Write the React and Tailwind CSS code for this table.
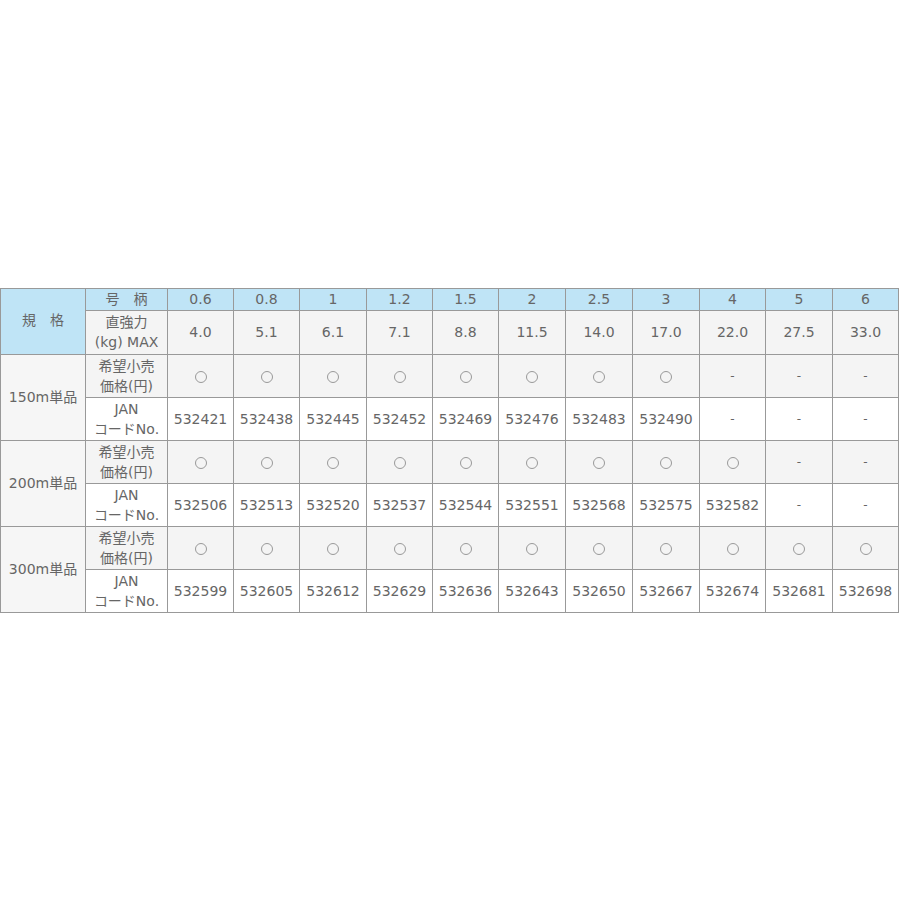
import React from 'react';

const COLS = [
  { w: 'w-[66px]', size: '0.6', kg: '4.0' },
  { w: 'w-[66px]', size: '0.8', kg: '5.1' },
  { w: 'w-[67px]', size: '1', kg: '6.1' },
  { w: 'w-[66px]', size: '1.2', kg: '7.1' },
  { w: 'w-[66px]', size: '1.5', kg: '8.8' },
  { w: 'w-[67px]', size: '2', kg: '11.5' },
  { w: 'w-[67px]', size: '2.5', kg: '14.0' },
  { w: 'w-[67px]', size: '3', kg: '17.0' },
  { w: 'w-[66px]', size: '4', kg: '22.0' },
  { w: 'w-[67px]', size: '5', kg: '27.5' },
  { w: 'w-[66px]', size: '6', kg: '33.0' },
];

const GROUPS = [
  {
    label: '150m単品',
    price: 8,
    jan: ['532421', '532438', '532445', '532452', '532469', '532476', '532483', '532490'],
  },
  {
    label: '200m単品',
    price: 9,
    jan: ['532506', '532513', '532520', '532537', '532544', '532551', '532568', '532575', '532582'],
  },
  {
    label: '300m単品',
    price: 11,
    jan: ['532599', '532605', '532612', '532629', '532636', '532643', '532650', '532667', '532674', '532681', '532698'],
  },
];

const cell = 'border border-[#999] text-center align-middle p-0';

function Circle() {
  return <span className="inline-block w-[12px] h-[12px] rounded-full border border-[#999] align-middle" />;
}

function Dash() {
  return <span className="text-[12px]">-</span>;
}

export default function App() {
  return (
    <div className="min-h-screen flex items-center bg-white">
      <table
        className="border-collapse table-fixed w-[899px] text-[14px] text-[#666] leading-[20px]"
        style={{ fontFamily: '"DejaVu Sans", "Noto Sans CJK JP", sans-serif' }}
      >
        <colgroup>
          <col className="w-[85px]" />
          <col className="w-[82px]" />
          {COLS.map((c, i) => <col key={i} className={c.w} />)}
        </colgroup>
        <tbody>
          <tr className="h-[22px] bg-[#bfe4f6]">
            <td rowSpan={2} className={`${cell} bg-[#bfe4f6]`}>
              <span className="relative -top-[1px]">規　格</span>
            </td>
            <td className={cell}>号　柄</td>
            {COLS.map((c, i) => <td key={i} className={cell}>{c.size}</td>)}
          </tr>
          <tr className="h-[44px] bg-[#f4f4f4]">
            <td className={cell}>直強力<br />(kg) MAX</td>
            {COLS.map((c, i) => <td key={i} className={cell}>{c.kg}</td>)}
          </tr>
          {GROUPS.map(g => (
            <React.Fragment key={g.label}>
              <tr className="h-[43px] bg-[#f4f4f4]">
                <td rowSpan={2} className={`${cell} bg-[#f6f6f6]`}>{g.label}</td>
                <td className={cell}>希望小売<br />価格(円)</td>
                {COLS.map((c, i) => (
                  <td key={i} className={cell}>{i < g.price ? <Circle /> : <Dash />}</td>
                ))}
              </tr>
              <tr className="h-[43px] bg-white">
                <td className={cell}>JAN<br />コードNo.</td>
                {COLS.map((c, i) => (
                  <td key={i} className={cell}>{g.jan[i] ? g.jan[i] : <Dash />}</td>
                ))}
              </tr>
            </React.Fragment>
          ))}
        </tbody>
      </table>
    </div>
  );
}
